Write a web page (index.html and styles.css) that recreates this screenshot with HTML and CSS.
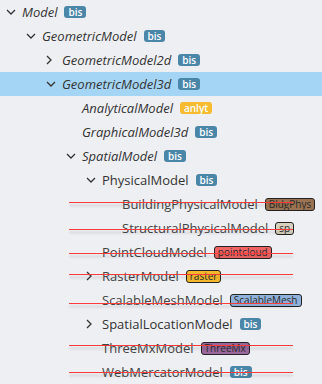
FILE: index.html
```html
<!DOCTYPE html>
<html lang="en">
<head>
    <meta charset="UTF-8">
    <meta name="viewport" content="width=device-width, initial-scale=1.0">
    <title>Schema Tree</title>
    <link rel="stylesheet" href="styles.css">
</head>
<body>
    <ul class="tree">
        <li class="row lv0 abstract">
            <span class="toggle"><svg width="10" height="6" viewBox="0 0 10 6"><polyline points="1,1 5,5 9,1"/></svg></span>
            <span class="label">Model</span><span class="badge bis">bis</span>
        </li>
        <li class="row lv1 abstract">
            <span class="toggle"><svg width="10" height="6" viewBox="0 0 10 6"><polyline points="1,1 5,5 9,1"/></svg></span>
            <span class="label">GeometricModel</span><span class="badge bis">bis</span>
        </li>
        <li class="row lv2 abstract">
            <span class="toggle"><svg width="6" height="10" viewBox="0 0 6 10"><polyline points="1,1 5,5 1,9"/></svg></span>
            <span class="label">GeometricModel2d</span><span class="badge bis">bis</span>
        </li>
        <li class="row lv2 abstract selected">
            <span class="toggle"><svg width="10" height="6" viewBox="0 0 10 6"><polyline points="1,1 5,5 9,1"/></svg></span>
            <span class="label">GeometricModel3d</span><span class="badge bis">bis</span>
        </li>
        <li class="row lv3 abstract">
            <span class="toggle"></span>
            <span class="label">AnalyticalModel</span><span class="badge anlyt">anlyt</span>
        </li>
        <li class="row lv3 abstract">
            <span class="toggle"></span>
            <span class="label">GraphicalModel3d</span><span class="badge bis">bis</span>
        </li>
        <li class="row lv3 abstract">
            <span class="toggle"><svg width="10" height="6" viewBox="0 0 10 6"><polyline points="1,1 5,5 9,1"/></svg></span>
            <span class="label">SpatialModel</span><span class="badge bis">bis</span>
        </li>
        <li class="row lv4">
            <span class="toggle"><svg width="10" height="6" viewBox="0 0 10 6"><polyline points="1,1 5,5 9,1"/></svg></span>
            <span class="label">PhysicalModel</span><span class="badge bis">bis</span>
        </li>
        <li class="row lv5 struck">
            <span class="toggle"></span>
            <span class="label">BuildingPhysicalModel</span><span class="badge tag bldg">BldgPhys</span>
            <span class="strike up2"></span>
        </li>
        <li class="row lv5 struck">
            <span class="toggle"></span>
            <span class="label">StructuralPhysicalModel</span><span class="badge tag sp">sp</span>
            <span class="strike down1"></span>
        </li>
        <li class="row lv4 struck">
            <span class="toggle"></span>
            <span class="label">PointCloudModel</span><span class="badge tag pointcloud">pointcloud</span>
            <span class="strike down1"></span>
        </li>
        <li class="row lv4 struck">
            <span class="toggle"><svg width="6" height="10" viewBox="0 0 6 10"><polyline points="1,1 5,5 1,9"/></svg></span>
            <span class="label">RasterModel</span><span class="badge tag raster">raster</span>
            <span class="strike up2"></span>
        </li>
        <li class="row lv4 struck">
            <span class="toggle"></span>
            <span class="label">ScalableMeshModel</span><span class="badge tag mesh">ScalableMesh</span>
            <span class="strike down3"></span>
        </li>
        <li class="row lv4">
            <span class="toggle"><svg width="6" height="10" viewBox="0 0 6 10"><polyline points="1,1 5,5 1,9"/></svg></span>
            <span class="label">SpatialLocationModel</span><span class="badge bis">bis</span>
        </li>
        <li class="row lv4 struck">
            <span class="toggle"></span>
            <span class="label">ThreeMxModel</span><span class="badge tag threemx">ThreeMx</span>
            <span class="strike up3"></span>
        </li>
        <li class="row lv4 struck">
            <span class="toggle"></span>
            <span class="label">WebMercatorModel</span><span class="badge bis">bis</span>
            <span class="strike"></span>
        </li>
    </ul>
</body>
</html>
```

FILE: styles.css
```css
body {
    margin: 0;
    padding: 0;
    background-color: #eeeff3;
    font-family: "Open Sans", "Noto Sans", Arial, sans-serif;
    color: #333;
}
.tree {
    list-style: none;
    margin: 0;
    padding: 0;
}
.row {
    position: relative;
    display: flex;
    align-items: center;
    height: 24px;
    font-size: 13px;
    white-space: nowrap;
}
.row.selected {
    background-color: #a5d5f5;
}
.lv0 { padding-left: 6px; }
.lv1 { padding-left: 26px; }
.lv2 { padding-left: 46px; }
.lv3 { padding-left: 66px; }
.lv4 { padding-left: 86px; }
.lv5 { padding-left: 106px; }

.toggle {
    display: flex;
    align-items: center;
    width: 16px;
    height: 24px;
    flex-shrink: 0;
}
.toggle svg {
    fill: none;
    stroke: #333;
    stroke-width: 1.3;
}
.abstract .label {
    font-style: italic;
}
.struck .label {
    color: #444;
}
.badge {
    display: inline-block;
    margin-left: 7px;
    padding: 0 4px;
    height: 12px;
    line-height: 12px;
    border-radius: 3px;
    font-size: 10px;
    color: #fff;
}
.bis {
    background-color: #4a86a8;
    font-weight: 600;
}
.anlyt {
    background-color: #f7bb2f;
    font-weight: 600;
}
.tag {
    height: 11px;
    line-height: 11px;
    padding: 0 3px;
    border: 1px solid #222;
    color: #2a2a2a;
}
.bldg { background-color: #9a7452; }
.sp { background-color: #d6d0bd; }
.pointcloud { background-color: #f06464; }
.raster { background-color: #f4b82c; }
.mesh { background-color: #8fb1da; }
.threemx { background-color: #9a689d; }

/* red strike markers with soft shadow */
.strike {
    position: absolute;
    left: 69px;
    top: 12px;
    width: 224px;
    height: 1px;
    background-color: #ff3b3b;
    box-shadow: 0 3px 3px rgba(0, 0, 0, 0.2);
}
.strike.up2 { top: 10px; }
.strike.up3 { top: 9px; }
.strike.down1 { top: 13px; }
.strike.down3 { top: 15px; }
```
